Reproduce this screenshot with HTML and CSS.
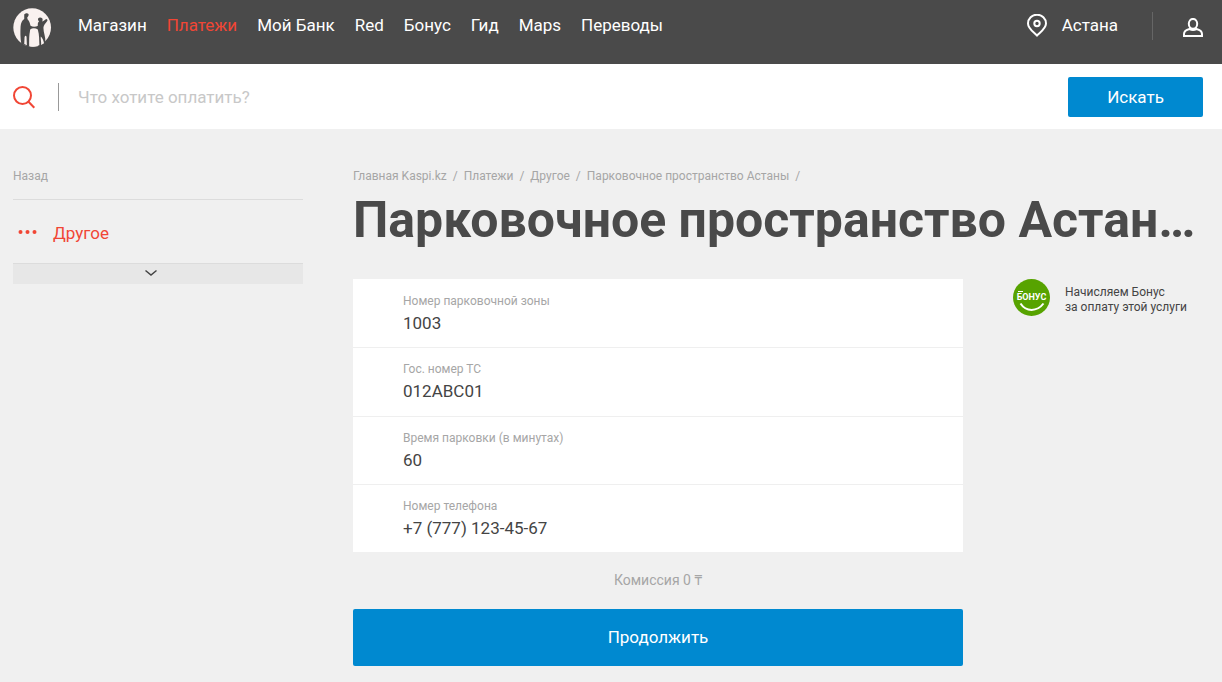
FILE: index.html
```html
<!DOCTYPE html>
<html lang="ru">
<head>
<meta charset="utf-8">
<meta name="viewport" content="width=device-width, initial-scale=1">
<title>Парковочное пространство Астаны</title>
<link rel="stylesheet" href="styles.css">
</head>
<body>
<header class="topbar">
  <div class="container topbar-inner">
    <a class="logo" href="#" aria-label="Kaspi.kz">
      <svg viewBox="0 0 116 118" width="39" height="39" aria-hidden="true">
        <ellipse cx="57" cy="59" rx="57" ry="58" fill="#f9f1ef"/>
        <g fill="#4a4a4a">
          <path d="M33 20c2-5 10-6 13-2 1 4-1 8-4 11l1 5c6 5 7 13 9 20 7 4 15 4 23 0v11c-9-5-18-5-24 0-3 16-3 34-3 53l-24-10c-3-18-3-37-2-53 1-10 4-17 11-22z"/>
          <path d="M75 32c3-4 9-4 13 0 1 3 1 6-1 9 6-2 9-7 13-8 4 1 4 5 2 7-4 6-11 12-11 20 0 14 7 28 6 43l-18 12c-1-17 0-35-5-50V51c0-5 1-8 4-10-3-3-4-6-3-9z"/>
        </g>
        <g fill="#f9f1ef">
          <path d="M51 71c3-9 19-9 22 0 2 14 3 31 1 45-8 2-17 2-24 0-1-15-1-31 1-45z"/>
          <path d="M34 88c2-5 5-5 6 0l1 25-8-4zM83 86c5 4 9 14 10 21l-9 5c1-9-2-18-1-26z"/>
        </g>
      </svg>
    </a>
    <nav class="nav" aria-label="Основное меню">
      <a href="#">Магазин</a>
      <a class="active" href="#" aria-current="page">Платежи</a>
      <a href="#">Мой Банк</a>
      <a href="#">Red</a>
      <a href="#">Бонус</a>
      <a href="#">Гид</a>
      <a href="#">Maps</a>
      <a href="#">Переводы</a>
    </nav>
    <div class="account">
      <button class="city" type="button">
        <svg viewBox="0 0 22 24" width="22" height="24" fill="none" stroke="#fff" stroke-width="2" aria-hidden="true">
          <path d="M11 21.500C7 17.600 2 14.600 2 9.500a9 8.800 0 0 1 18 0c0 4.800-5 8.100-9 12z"/>
          <circle cx="11" cy="9.500" r="2.700"/>
        </svg>
        <span>Астана</span>
      </button>
      <a class="user" href="#" aria-label="Войти">
        <svg viewBox="0 0 20 20" width="20" height="20" fill="none" stroke="#fff" stroke-width="2" aria-hidden="true">
          <ellipse cx="10" cy="5.800" rx="4.200" ry="4.900"/>
          <path d="M6.500 11C3 11.800 1 13.500 1 16v2h18v-2c0-2.500-2-4.200-5.500-5-2 1-5 1-7 0z"/>
        </svg>
      </a>
    </div>
  </div>
</header>

<form class="search" role="search">
  <div class="container search-inner">
    <svg class="search-icon" viewBox="0 0 22 25" width="22" height="25" fill="none" stroke="#f14635" stroke-width="2" aria-hidden="true">
      <circle cx="9.500" cy="11.500" r="8.500"/>
      <path d="M15.300 17.500l6 6.200"/>
    </svg>
    <input class="search-input" type="text" placeholder="Что хотите оплатить?" aria-label="Что хотите оплатить?">
    <button class="button search-button" type="button">Искать</button>
  </div>
</form>

<main class="container page">
  <aside class="sidebar">
    <a class="back" href="#">Назад</a>
    <a class="category" href="#">
      <svg viewBox="0 0 20 8" width="20" height="8" fill="#f14635" aria-hidden="true">
        <circle cx="2.500" cy="3" r="2"/><circle cx="9.500" cy="3" r="2"/><circle cx="16.500" cy="3" r="2"/>
      </svg>
      <span>Другое</span>
    </a>
    <button class="expand" type="button" aria-label="Развернуть">
      <svg viewBox="0 0 14 10" width="14" height="10" fill="none" stroke="#444" stroke-width="1.500" aria-hidden="true">
        <path d="M1.500 1.500L7 6l5.500-4.500"/>
      </svg>
    </button>
  </aside>

  <div class="content">
    <nav class="crumbs" aria-label="Навигация">
      <a href="#">Главная Kaspi.kz</a><a href="#">Платежи</a><a href="#">Другое</a><a href="#">Парковочное пространство Астаны</a>
    </nav>
    <h1 class="title">Парковочное пространство Астаны</h1>
    <div class="columns">
      <form class="payment">
        <div class="fields">
          <div class="field">
            <label for="zone">Номер парковочной зоны</label>
            <input id="zone" type="text" value="1003">
          </div>
          <div class="field">
            <label for="plate">Гос. номер ТС</label>
            <input id="plate" type="text" value="012ABC01">
          </div>
          <div class="field">
            <label for="time">Время парковки (в минутах)</label>
            <input id="time" type="text" value="60">
          </div>
          <div class="field">
            <label for="phone">Номер телефона</label>
            <input id="phone" type="tel" value="+7 (777) 123-45-67">
          </div>
        </div>
        <p class="fee">Комиссия 0 ₸</p>
        <button class="button submit" type="button">Продолжить</button>
      </form>
      <div class="bonus">
        <svg viewBox="0 0 37 37" width="37" height="37" aria-hidden="true">
          <circle cx="18.500" cy="18.500" r="18.500" fill="#57a300"/>
          <path d="M5 12.500h5" stroke="#fff" stroke-width="1"/>
          <text class="bonus-word" x="18.500" y="21" text-anchor="middle">БОНУС</text>
          <path d="M7.500 24.500c5.500 8.500 16.500 8.500 23 0" fill="none" stroke="#fff" stroke-width="2"/>
        </svg>
        <p>Начисляем Бонус<br>за оплату этой услуги</p>
      </div>
    </div>
  </div>
</main>
</body>
</html>
```
FILE: styles.css
```css
* {
  box-sizing: border-box;
}

body {
  margin: 0;
  background: #f0f0f0;
  color: #444;
  font-family: Roboto, "Noto Sans", sans-serif;
  font-size: 17px;
}

a {
  color: inherit;
  text-decoration: none;
}

button,
input {
  margin: 0;
  padding: 0;
  border: 0;
  background: none;
  color: inherit;
  font: inherit;
}

button {
  cursor: pointer;
}

svg {
  display: block;
  flex-shrink: 0;
}

.container {
  padding: 0 19px 0 13px;
}

.button {
  border-radius: 2px;
  background: #0089d0;
  color: #fff;
}

.topbar {
  background: #4a4a4a;
  color: #fff;
}

.topbar-inner {
  display: flex;
  align-items: flex-start;
  padding-top: 8px;
  padding-bottom: 17px;
}

.nav {
  display: flex;
  gap: 20px;
  margin-left: 26px;
  line-height: 35px;
}

.nav .active {
  color: #f14635;
}

.account {
  display: flex;
  align-items: center;
  margin-left: auto;
}

.city {
  display: flex;
  align-items: center;
  gap: 14px;
  line-height: 35px;
}

.user {
  margin-left: 34px;
  padding: 6px 0 2px 30px;
  border-left: 1px solid #666;
}

.search {
  background: #fff;
}

.search-inner {
  display: flex;
  align-items: center;
  height: 65px;
}

.search-input {
  flex: 1;
  min-width: 0;
  height: 28px;
  margin-left: 23px;
  padding-left: 19px;
  border-left: 1px solid #999;
}

.search-input::placeholder {
  color: #c8c8c8;
  opacity: 1;
}

.search-button {
  width: 135px;
  height: 40px;
}

.page {
  display: grid;
  grid-template-columns: 290px minmax(0, 1fr);
  gap: 50px;
  padding-top: 39px;
  padding-bottom: 16px;
}

.back {
  display: block;
  padding-bottom: 15px;
  border-bottom: 1px solid #dcdcdc;
  color: #a6a6a6;
  font-size: 12px;
  line-height: 16px;
}

.category {
  display: flex;
  align-items: center;
  gap: 15px;
  height: 63px;
  padding: 3px 0 0 5px;
  color: #f14635;
}

.expand {
  display: flex;
  align-items: center;
  justify-content: center;
  width: 100%;
  height: 21px;
  padding-right: 14px;
  border-top: 1px solid #dcdcdc;
  background: #e7e7e7;
}

.crumbs {
  display: flex;
  flex-wrap: wrap;
  color: #a6a6a6;
  font-size: 12px;
  line-height: 16px;
}

.crumbs a::after {
  content: "/";
  margin: 0 6px;
}

.title {
  margin: 6px 6px 29px 0;
  overflow: hidden;
  color: #4a4a4a;
  font-size: 50px;
  font-weight: 700;
  line-height: 60px;
  text-overflow: ellipsis;
  white-space: nowrap;
}

.columns {
  display: grid;
  grid-template-columns: minmax(0, 1fr) 190px;
  gap: 50px;
  align-items: start;
}

.fields {
  display: grid;
  grid-auto-rows: 1fr;
  min-height: 273px;
  background: #fff;
}

.field {
  display: flex;
  flex-direction: column;
  gap: 2px;
  padding: 14px 50px 11px;
}

.field + .field {
  padding-top: 13px;
  border-top: 1px solid #efefef;
}

.field label {
  color: #a6a6a6;
  font-size: 12px;
  line-height: 16px;
}

.field input {
  width: 100%;
  height: 24px;
}

.fee {
  margin: 20px 0;
  color: #a6a6a6;
  font-size: 14px;
  line-height: 17px;
  text-align: center;
}

.submit {
  width: 100%;
  height: 57px;
  padding-bottom: 1px;
}

.bonus {
  display: flex;
  gap: 15px;
}

.bonus p {
  margin: 6px 0 0;
  font-size: 12px;
  line-height: 15px;
}

.bonus-word {
  fill: #fff;
  font-family: "Liberation Sans Narrow", Roboto, sans-serif;
  font-size: 9px;
  font-weight: 700;
}
```
